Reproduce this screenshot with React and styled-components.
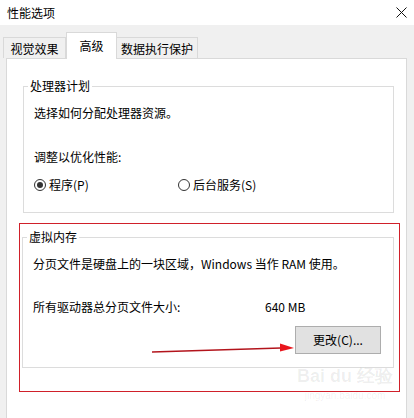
import React from "react"
import styled, { createGlobalStyle } from "styled-components"

const GlobalStyle = createGlobalStyle`
  html, body {
    margin: 0;
    padding: 0;
    background: #f0f0f0;
  }
  body {
    font: normal 400 12px/16px "Noto Sans CJK SC", "Noto Sans", sans-serif;
    color: #000;
  }
  #root {
    width: 414px;
    height: 418px;
    overflow: hidden;
  }
`

const Window = styled.div`
  display: flex;
  flex-direction: column;
  width: 414px;
  height: 418px;
  background: #f0f0f0;
`

const TitleBar = styled.div`
  display: flex;
  align-items: center;
  justify-content: space-between;
  height: 25px;
  padding: 0 7px;
  background: #fff;
`

const Title = styled.span`
  font-size: 12px;
  color: #000;
`

const CloseIcon = () => (
  <svg width="11" height="11" viewBox="0 0 11 11">
    <path d="M0.5 0.5 L10.5 10.5 M10.5 0.5 L0.5 10.5" stroke="#111" strokeWidth="1" fill="none" />
  </svg>
)

const TabStrip = styled.div`
  display: flex;
  align-items: flex-end;
  height: 33px;
  padding-left: 3px;
`

const Tab = styled.div`
  position: relative;
  box-sizing: border-box;
  display: flex;
  justify-content: center;
  width: ${(p) => p.$w}px;
  height: ${(p) => (p.$active ? 27 : 21)}px;
  margin-bottom: ${(p) => (p.$active ? -1 : 0)}px;
  padding-top: ${(p) => (p.$active ? 5 : 3)}px;
  border: 1px solid #d9d9d9;
  border-bottom: none;
  border-left-width: ${(p) => (p.$noLeft ? 0 : 1)}px;
  background: ${(p) => (p.$active ? "#fff" : "#f0f0f0")};
  z-index: ${(p) => (p.$active ? 2 : 1)};
  color: #000;
`

const Panel = styled.div`
  position: relative;
  flex: 1;
  margin: 0 7px 0 6px;
  padding: 27px 12px 0 16px;
  background: #fff;
  border: 1px solid #d9d9d9;
  border-bottom: none;
`

const Group = styled.div`
  position: relative;
  padding: 18px 10px ${(p) => p.$padBottom}px 10px;
  border: 1px solid #dcdcdc;
`

const Legend = styled.span`
  position: absolute;
  left: 4px;
  top: -9px;
  padding: 0 2px;
  line-height: 16px;
  background: #fff;
  color: #000;
`

const Line = styled.div`
  margin-top: ${(p) => p.$top}px;
  line-height: 16px;
  white-space: nowrap;
`

const RadioRow = styled.div`
  display: grid;
  grid-template-columns: 144px auto;
  margin-top: 12px;
  height: 16px;
`

const Option = styled.label`
  display: flex;
  align-items: center;
  gap: 3px;
  white-space: nowrap;
`

const RadioDot = styled.span`
  position: relative;
  box-sizing: border-box;
  width: 12px;
  height: 12px;
  border: 1px solid #333;
  border-radius: 50%;
  background: #fff;

  &::after {
    content: "";
    display: ${(p) => (p.$checked ? "block" : "none")};
    position: absolute;
    left: 2px;
    top: 2px;
    width: 6px;
    height: 6px;
    border-radius: 50%;
    background: #333;
  }
`

const Highlight = styled.div`
  position: relative;
  margin: 10px -6px 0 -4px;
  padding: 13px 5px 23px 2px;
  border: 1px solid #d0202a;
`

const SizeRow = styled.div`
  display: grid;
  grid-template-columns: 232px auto;
  margin-top: 27px;
  line-height: 16px;
`

const ButtonRow = styled.div`
  display: flex;
  justify-content: flex-end;
  margin-top: 11px;
  padding-right: 2px;
`

const Button = styled.button`
  box-sizing: border-box;
  width: 86px;
  height: 28px;
  padding: 0;
  border: 1px solid #adadad;
  background: #e1e1e1;
  font: inherit;
  color: #000;
`

const Arrow = styled.svg`
  position: absolute;
  left: 130px;
  top: 116px;
`

const Watermark = styled.div`
  position: absolute;
  left: 290px;
  top: 304px;
  display: flex;
  flex-direction: column;
  align-items: center;
  white-space: nowrap;
  color: rgba(0, 0, 0, 0.07);
  pointer-events: none;
`

const MarkBig = styled.span`
  font: normal 700 18px/26px "Liberation Sans", sans-serif;
`

const MarkSmall = styled.span`
  font: normal 400 10px/14px "Liberation Sans", sans-serif;
`

export default function App() {
  return (
    <Window>
      <GlobalStyle />
      <TitleBar>
        <Title>性能选项</Title>
        <CloseIcon />
      </TitleBar>
      <TabStrip>
        <Tab $w={63}>视觉效果</Tab>
        <Tab $w={51} $active>高级</Tab>
        <Tab $w={81} $noLeft>数据执行保护</Tab>
      </TabStrip>
      <Panel>
        <Group $padBottom={19}>
          <Legend>处理器计划</Legend>
          <Line $top={0}>选择如何分配处理器资源。</Line>
          <Line $top={28}>调整以优化性能:</Line>
          <RadioRow>
            <Option>
              <RadioDot $checked />
              程序(P)
            </Option>
            <Option>
              <RadioDot />
              后台服务(S)
            </Option>
          </RadioRow>
        </Group>
        <Highlight>
          <Group $padBottom={13}>
            <Legend>虚拟内存</Legend>
            <Line $top={0}>分页文件是硬盘上的一块区域，Windows 当作 RAM 使用。</Line>
            <SizeRow>
              <span>所有驱动器总分页文件大小:</span>
              <span>640 MB</span>
            </SizeRow>
            <ButtonRow>
              <Button>更改(C)...</Button>
            </ButtonRow>
          </Group>
          <Arrow width="146" height="16" viewBox="0 0 146 16">
            <path d="M2 12 L131 8" stroke="#b3141c" strokeWidth="1.6" fill="none" />
            <polygon points="130,3.5 144,8 130,11.5" fill="#e8161d" />
          </Arrow>
        </Highlight>
        <Watermark>
          <MarkBig>Bai du 经验</MarkBig>
          <MarkSmall>jingyan.baidu.com</MarkSmall>
        </Watermark>
      </Panel>
    </Window>
  )
}
